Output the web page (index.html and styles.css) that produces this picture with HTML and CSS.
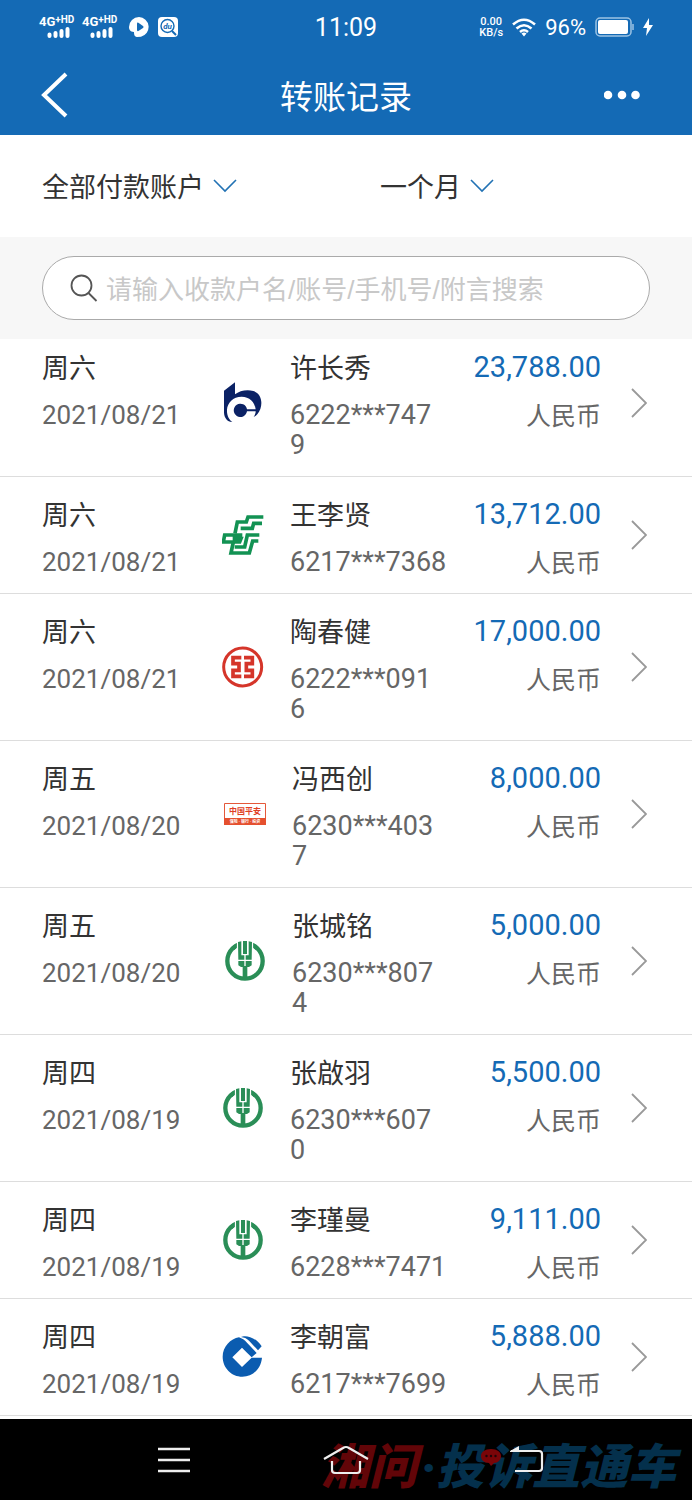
FILE: index.html
```
<!DOCTYPE html>
<html lang="zh-CN">
<head>
  <meta charset="UTF-8">
  <meta name="viewport" content="width=device-width, initial-scale=1.0">
  <title>转账记录</title>
  <link rel="stylesheet" href="styles.css">
</head>
<body>
  <!-- Shared icons -->
  <svg class="sprite" aria-hidden="true">
    <symbol id="bars" viewBox="0 0 24 11">
      <path d="M2.5 9V7.5M8.500 9V6M14.500 9V4M20.500 9V2" stroke="#fff" stroke-width="4" stroke-linecap="round"/>
    </symbol>
    <symbol id="down" viewBox="0 0 24 14">
      <path d="M1 1l11 11L23 1" fill="none" stroke="#2272b4" stroke-width="1.6"/>
    </symbol>
    <symbol id="next" viewBox="0 0 16 30">
      <path d="M1 1l14 14L1 29" fill="none" stroke="#999" stroke-width="1.8"/>
    </symbol>
    <symbol id="bocom" viewBox="66 69 126 126">
      <path fill="#0b2265" d="M72 95L105 70V106C118 95 142 90 160 96C184 104 188 130 181 150C176 163 169 171 161 174C166 166 167 162 167 157H141A20 20 0 1 1 141 151H167C164 128 148 113 125 113C99 113 82 132 81 152C80 170 88 183 97 189C84 190 72 178 72 160Z"/>
    </symbol>
    <symbol id="psbc" viewBox="66 463 126 126">
      <g fill="none" stroke="#129253" stroke-width="11">
        <path d="M190 472H144L139 487H112L105 521"/>
        <path d="M186 491H161L157 506H122"/>
        <path d="M127 526H74L70 547H119L123 537H98"/>
        <path d="M178 526H142L134 562H104"/>
        <path d="M175 544H158L148 580H93L100 547"/>
      </g>
    </symbol>
    <symbol id="icbc" viewBox="66 48 126 126">
      <g fill="none" stroke="#d5352a">
        <circle cx="128" cy="111" r="57" stroke-width="9"/>
        <path stroke-width="11" d="M124 83H99V101H117V121H99V139H124M132 83H157V101H139V121H157V139H132"/>
      </g>
    </symbol>
    <symbol id="abc" viewBox="0 0 126 126">
      <circle cx="63" cy="63" r="53" fill="none" stroke="#2a8e57" stroke-width="13"/>
      <path fill="#fff" d="M38 0H88V28H38Z"/>
      <path fill="#2a8e57" d="M57 3H69V42H57ZM42 6L52 4V46H61V59H43ZM84 6L74 4V46H65V59H83ZM43 63H61V81H51L43 76ZM65 63H83V76L75 81H65ZM56 78H70V120H56Z"/>
      <path fill="#2a8e57" d="M22 22L38 9V24L30 31ZM104 22L88 9V24L96 31Z"/>
    </symbol>
    <symbol id="ccb" viewBox="66 406 126 126">
      <path fill="#0b5cb0" d="M117 410C92 414 68 438 68 468C68 502 95 528 127 528C158 528 183 504 186 471H155L126 499L97 470L126 441L141 456L155 470L170 457L141 426C134 418 126 413 117 410Z"/>
      <path fill="#0b5cb0" d="M123 409C134 403 164 406 185 437L174 449L147 420C140 413 132 410 123 409Z"/>
    </symbol>
  </svg>

  <header class="top">
    <div class="status">
      <div class="status-left">
        <div class="signal"><span>4G<sup>+HD</sup></span><svg><use href="#bars"/></svg></div>
        <div class="signal"><span>4G<sup>+HD</sup></span><svg><use href="#bars"/></svg></div>
        <svg class="app" viewBox="0 0 20 20">
          <path fill="#fff" d="M10 0a10 10 0 0 1 2 19.700L8 20c-3 0-3-4-3-5C1 15 0 12 0 10A10 10 0 0 1 10 0z"/>
          <path fill="#146ab5" d="M8 6.500q0-1.500 1.400-.8L14 9q1.200 1 0 2l-4.600 3Q8 14.500 8 13z"/>
        </svg>
        <svg class="app" viewBox="0 0 20 20">
          <rect width="20" height="20" rx="4" fill="#fff"/>
          <circle cx="9.500" cy="9" r="6.500" fill="none" stroke="#146ab5" stroke-width="1.400"/>
          <path d="M14 14l4 4" stroke="#146ab5" stroke-width="2"/>
          <text x="9.500" y="12" font-size="8" font-style="italic" font-weight="700" text-anchor="middle" fill="#146ab5">du</text>
        </svg>
      </div>
      <time class="clock">11:09</time>
      <div class="status-right">
        <div class="speed">0.00<br>KB/s</div>
        <svg class="wifi" viewBox="0 0 24 19">
          <g fill="none" stroke="#fff" stroke-width="2.600">
            <path d="M1 6.500Q12-3 23 6.500"/>
            <path d="M4.500 10.500Q12 4 19.500 10.500"/>
            <path d="M8 14Q12 10.500 16 14"/>
          </g>
          <path fill="#fff" d="M9.500 15.500Q12 13.500 14.500 15.500L12 18.500z"/>
        </svg>
        <span class="percent">96%</span>
        <svg class="battery" viewBox="0 0 39 20">
          <rect x="1" y="1" width="35" height="18" rx="4" fill="none" stroke="#9cc3e4" stroke-width="1.500"/>
          <rect x="3" y="3" width="30" height="14" rx="2" fill="#fff"/>
          <path d="M38 7v6" stroke="#9cc3e4" stroke-width="1.500"/>
        </svg>
        <svg class="bolt" viewBox="0 0 10 18"><path fill="#fff" d="M6 0L0 10h4L3 18 10 7H6z"/></svg>
      </div>
    </div>
    <div class="titlebar">
      <button class="back" aria-label="返回">
        <svg viewBox="0 0 28 46"><path d="M25 2L3 23l22 21" fill="none" stroke="#fff" stroke-width="4"/></svg>
      </button>
      <h1>转账记录</h1>
      <button class="more" aria-label="更多">
        <svg viewBox="0 0 36 10"><g fill="#fff"><circle cx="4" cy="5" r="4.300"/><circle cx="18" cy="5" r="4.300"/><circle cx="31.500" cy="5" r="4.300"/></g></svg>
      </button>
    </div>
  </header>

  <div class="filters">
    <label class="filter">
      <select aria-label="付款账户"><option>全部付款账户</option></select>
      <svg><use href="#down"/></svg>
    </label>
    <label class="filter">
      <select aria-label="时间范围"><option>一个月</option></select>
      <svg><use href="#down"/></svg>
    </label>
  </div>

  <div class="search">
    <label class="search-box">
      <svg viewBox="0 0 28 28"><g fill="none" stroke="#555" stroke-width="1.800"><circle cx="11.500" cy="11.500" r="10"/><path d="M18.500 19l8 8"/></g></svg>
      <input type="text" aria-label="搜索" placeholder="请输入收款户名/账号/手机号/附言搜索">
    </label>
  </div>

  <ul class="records">
    <li><a class="record" href="#">
      <div><p class="day">周六</p><p class="date">2021/08/21</p></div>
      <svg class="bank"><use href="#bocom"/></svg>
      <div><p class="name">许长秀</p><p class="account">6222***747<br>9</p></div>
      <div class="money"><p class="amount">23,788.00</p><p class="currency">人民币</p></div>
      <svg class="next"><use href="#next"/></svg>
    </a></li>
    <li><a class="record" href="#">
      <div><p class="day">周六</p><p class="date">2021/08/21</p></div>
      <svg class="bank"><use href="#psbc"/></svg>
      <div><p class="name">王李贤</p><p class="account">6217***7368</p></div>
      <div class="money"><p class="amount">13,712.00</p><p class="currency">人民币</p></div>
      <svg class="next"><use href="#next"/></svg>
    </a></li>
    <li><a class="record" href="#">
      <div><p class="day">周六</p><p class="date">2021/08/21</p></div>
      <svg class="bank"><use href="#icbc"/></svg>
      <div><p class="name">陶春健</p><p class="account">6222***091<br>6</p></div>
      <div class="money"><p class="amount">17,000.00</p><p class="currency">人民币</p></div>
      <svg class="next"><use href="#next"/></svg>
    </a></li>
    <li><a class="record wide" href="#">
      <div><p class="day">周五</p><p class="date">2021/08/20</p></div>
      <svg class="bank" viewBox="0 0 42 42">
        <path fill="#fff" stroke="#e5583a" d="M.5 10.500H41.500V31.500H.5Z"/>
        <path fill="#e5502f" d="M0 25H42V32H0Z"/>
        <text x="21" y="21" font-size="8" font-weight="700" text-anchor="middle" fill="#df3f25">中国平安</text>
        <text x="21" y="30" font-size="4" font-weight="700" text-anchor="middle" fill="#fff">保险 · 银行 · 投资</text>
      </svg>
      <div><p class="name">冯西创</p><p class="account">6230***403<br>7</p></div>
      <div class="money"><p class="amount">8,000.00</p><p class="currency">人民币</p></div>
      <svg class="next"><use href="#next"/></svg>
    </a></li>
    <li><a class="record wide" href="#">
      <div><p class="day">周五</p><p class="date">2021/08/20</p></div>
      <svg class="bank"><use href="#abc"/></svg>
      <div><p class="name">张城铭</p><p class="account">6230***807<br>4</p></div>
      <div class="money"><p class="amount">5,000.00</p><p class="currency">人民币</p></div>
      <svg class="next"><use href="#next"/></svg>
    </a></li>
    <li><a class="record" href="#">
      <div><p class="day">周四</p><p class="date">2021/08/19</p></div>
      <svg class="bank"><use href="#abc"/></svg>
      <div><p class="name">张啟羽</p><p class="account">6230***607<br>0</p></div>
      <div class="money"><p class="amount">5,500.00</p><p class="currency">人民币</p></div>
      <svg class="next"><use href="#next"/></svg>
    </a></li>
    <li><a class="record" href="#">
      <div><p class="day">周四</p><p class="date">2021/08/19</p></div>
      <svg class="bank"><use href="#abc"/></svg>
      <div><p class="name">李瑾曼</p><p class="account">6228***7471</p></div>
      <div class="money"><p class="amount">9,111.00</p><p class="currency">人民币</p></div>
      <svg class="next"><use href="#next"/></svg>
    </a></li>
    <li><a class="record" href="#">
      <div><p class="day">周四</p><p class="date">2021/08/19</p></div>
      <svg class="bank"><use href="#ccb"/></svg>
      <div><p class="name">李朝富</p><p class="account">6217***7699</p></div>
      <div class="money"><p class="amount">5,888.00</p><p class="currency">人民币</p></div>
      <svg class="next"><use href="#next"/></svg>
    </a></li>
  </ul>

  <nav class="system">
    <div class="watermark">
      <span class="red">湘问</span><span>·</span><span>投诉直通车</span>
      <svg class="bubble" viewBox="0 0 20 18">
        <path fill="#7a0508" d="M10 0c6 0 10 3 10 7s-3 7-7 7l-3 3-2-3c-5 0-8-3-8-7s4-7 10-7z"/>
        <g fill="#1d0508"><circle cx="5.500" cy="7" r="1.200"/><circle cx="10" cy="7" r="1.200"/><circle cx="14.500" cy="7" r="1.200"/></g>
      </svg>
    </div>
    <button aria-label="菜单">
      <svg viewBox="0 0 46 30"><path d="M13 4H45M13 15H45M13 26H45" stroke="#eee" stroke-width="2.400"/></svg>
    </button>
    <button aria-label="主页">
      <svg viewBox="0 0 46 30"><g fill="none" stroke="#eee" stroke-width="2.200"><path d="M1 14L20 3q3-2 6 0L45 14"/><path d="M9 16v9q0 3 3 3H34q3 0 3-3V16"/></g></svg>
    </button>
    <button aria-label="返回上一页">
      <svg viewBox="0 0 46 30"><path d="M10 6H38q3 0 3 3V23q0 3-3 3H14" fill="none" stroke="#eee" stroke-width="2.200"/><path fill="#eee" d="M9 6L18 1V7H9z"/></svg>
    </button>
  </nav>
</body>
</html>
```
FILE: styles.css
```
* {
  box-sizing: border-box;
}
body {
  margin: 0;
  min-height: 100vh;
  display: flex;
  flex-direction: column;
  background: #fff;
  color: #333;
  font-family: Roboto, "Noto Sans CJK SC", sans-serif;
}
h1, p, ul {
  margin: 0;
  padding: 0;
}
ul {
  list-style: none;
}
svg {
  display: block;
}
button {
  padding: 0;
  border: none;
  background: none;
  cursor: pointer;
}
.sprite {
  position: absolute;
  width: 0;
  height: 0;
}

/* Header */
.top {
  background: #146ab5;
  color: #fff;
}
.status {
  display: grid;
  grid-template-columns: 1fr auto 1fr;
  align-items: center;
  height: 54px;
  padding: 0 39px;
}
.status-left, .status-right {
  display: flex;
  align-items: center;
}
.status-left {
  gap: 5px;
}
.status-right {
  justify-content: flex-end;
  gap: 9px;
}
.signal {
  width: 38px;
  font-size: 13px;
  font-weight: 700;
  line-height: 10px;
  white-space: nowrap;
}
.signal sup {
  font-size: 10px;
  line-height: 0;
  vertical-align: 3px;
}
.signal svg {
  width: 24px;
  height: 11px;
  margin-left: 8px;
}
.app {
  width: 20px;
  height: 20px;
  margin-left: 4px;
}
.clock {
  font-size: 25px;
}
.speed {
  font-size: 11px;
  font-weight: 500;
  line-height: 11px;
  text-align: center;
}
.wifi {
  width: 24px;
  height: 19px;
}
.percent {
  font-size: 22px;
}
.battery {
  width: 39px;
  height: 20px;
}
.bolt {
  width: 10px;
  height: 18px;
}
.titlebar {
  display: grid;
  grid-template-columns: 1fr auto 1fr;
  align-items: center;
  height: 81px;
  padding: 0 41px;
}
.back svg {
  width: 28px;
  height: 46px;
}
.more {
  justify-self: end;
  padding-right: 11px;
}
.more svg {
  width: 36px;
  height: 10px;
}
.titlebar h1 {
  font-size: 33px;
  font-weight: 400;
}

/* Filters */
.filters {
  display: grid;
  grid-template-columns: 52% 1fr;
  align-items: center;
  height: 102px;
  padding-left: 42px;
}
.filter {
  display: flex;
  align-items: center;
  gap: 9px;
}
.filter select {
  appearance: none;
  padding: 4px 0 0;
  border: none;
  background: none;
  color: #333;
  font-family: inherit;
  font-size: 27px;
}
.filter svg {
  width: 24px;
  height: 14px;
}

/* Search */
.search {
  position: relative;
  z-index: 1;
  padding: 19px 42px;
  background: #f7f7f7;
}
.search-box {
  display: flex;
  align-items: center;
  gap: 8px;
  height: 64px;
  padding: 0 27px;
  border: 1px solid #aaa;
  border-radius: 32px;
  background: #fff;
}
.search-box svg {
  flex: none;
  width: 28px;
  height: 28px;
}
.search-box input {
  flex: 1;
  min-width: 0;
  padding: 4px 0 0;
  border: none;
  outline: none;
  background: none;
  font-family: "Liberation Sans", "Noto Sans CJK SC", sans-serif;
  font-size: 26px;
}
.search-box input::placeholder {
  color: #c8c8c8;
}

/* Records, scrolled a little under the search bar */
.records {
  flex: 1;
  margin-top: -9px;
}
.record {
  display: grid;
  grid-template-columns: 180px 42px 1fr auto 16px;
  align-items: center;
  padding: 16px 45px 16px 42px;
  border-bottom: 1px solid #ddd;
  color: #666;
  font-size: 26px;
  line-height: 30px;
  text-decoration: none;
}
.record.wide {
  grid-template-columns: 182px 42px 1fr auto 16px;
}
.record > div {
  align-self: start;
  padding-top: 6px;
}
.bank {
  width: 42px;
  height: 42px;
}
.bank + div {
  padding-left: 26px;
}
.day, .name {
  margin-bottom: 14px;
  color: #333;
  font-size: 27px;
  line-height: 34px;
}
.account {
  font-size: 27px;
}
.money {
  margin: 0 30px -3px 0;
  text-align: right;
}
.amount {
  margin-bottom: 18px;
  color: #146ab5;
  font-size: 29px;
}
.currency {
  font-size: 25px;
  line-height: 33px;
}
.next {
  width: 16px;
  height: 30px;
}

/* System bar */
.system {
  position: relative;
  display: flex;
  align-items: center;
  justify-content: center;
  gap: 132px;
  height: 81px;
  background: #000;
}
.system button {
  position: relative;
}
.system button svg {
  width: 46px;
  height: 30px;
}
.watermark {
  position: absolute;
  right: 16px;
  bottom: 8px;
  display: flex;
  color: #04304c;
  font-size: 48px;
  font-style: italic;
  font-weight: 900;
  line-height: 48px;
}
.watermark .red {
  margin-right: 4px;
  color: #620508;
}
.bubble {
  position: absolute;
  top: 5px;
  left: 160px;
  width: 20px;
  height: 18px;
}
```
